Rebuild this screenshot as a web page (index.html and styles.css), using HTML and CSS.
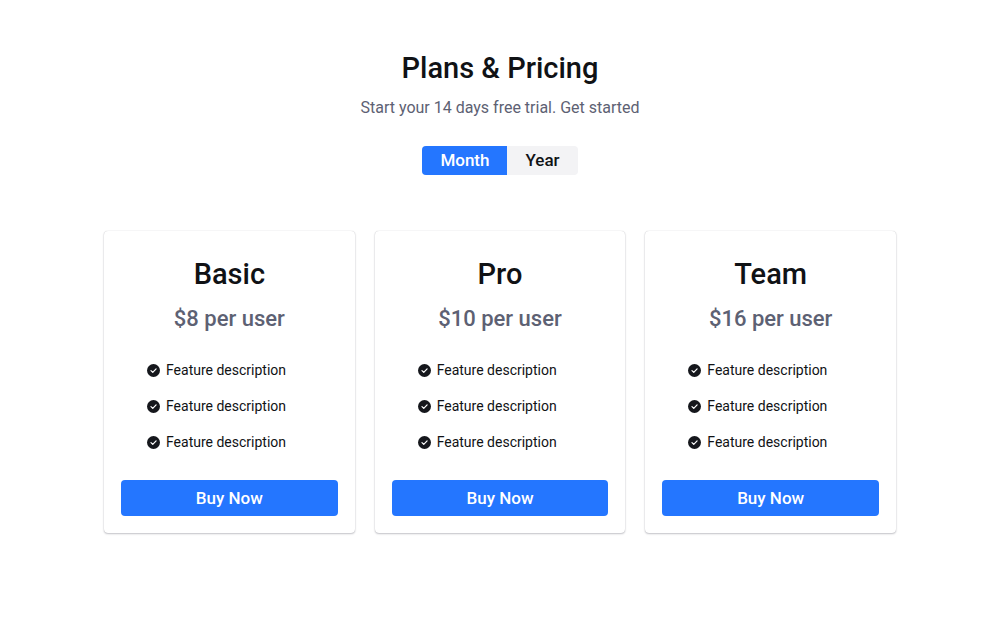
FILE: index.html
```html
<!DOCTYPE html>
<html lang="en">
<head>
  <title>Plans &amp; Pricing</title>
  <meta charset="UTF-8">
  <meta name="viewport" content="width=device-width, initial-scale=1.0">
  <link rel="stylesheet" href="styles.css">
</head>
<body>
  <svg class="sprite" aria-hidden="true">
    <symbol id="check" viewBox="0 0 14 14">
      <circle cx="7" cy="7" r="7" fill="#15171c"/>
      <path d="M4.3 7.2l1.9 1.8 3.6-3.7" fill="none" stroke="#fff" stroke-width="1.3" stroke-linecap="round" stroke-linejoin="round"/>
    </symbol>
  </svg>

  <main class="pricing">
    <header class="intro">
      <h1>Plans &amp; Pricing</h1>
      <p>Start your 14 days free trial. Get started</p>
      <div class="toggle" role="group" aria-label="Billing period">
        <button type="button" class="active" aria-pressed="true">Month</button>
        <button type="button" aria-pressed="false">Year</button>
      </div>
    </header>

    <div class="plans">
      <section class="card">
        <h2>Basic</h2>
        <p class="price">$8 per user</p>
        <ul>
          <li><svg class="icon"><use href="#check"/></svg>Feature description</li>
          <li><svg class="icon"><use href="#check"/></svg>Feature description</li>
          <li><svg class="icon"><use href="#check"/></svg>Feature description</li>
        </ul>
        <button type="button" class="buy">Buy Now</button>
      </section>
      <section class="card">
        <h2>Pro</h2>
        <p class="price">$10 per user</p>
        <ul>
          <li><svg class="icon"><use href="#check"/></svg>Feature description</li>
          <li><svg class="icon"><use href="#check"/></svg>Feature description</li>
          <li><svg class="icon"><use href="#check"/></svg>Feature description</li>
        </ul>
        <button type="button" class="buy">Buy Now</button>
      </section>
      <section class="card">
        <h2>Team</h2>
        <p class="price">$16 per user</p>
        <ul>
          <li><svg class="icon"><use href="#check"/></svg>Feature description</li>
          <li><svg class="icon"><use href="#check"/></svg>Feature description</li>
          <li><svg class="icon"><use href="#check"/></svg>Feature description</li>
        </ul>
        <button type="button" class="buy">Buy Now</button>
      </section>
    </div>
  </main>

  <script>
    const options = document.querySelectorAll('.toggle button');
    options.forEach(btn => btn.addEventListener('click', () => {
      options.forEach(b => {
        b.classList.toggle('active', b === btn);
        b.setAttribute('aria-pressed', b === btn);
      });
    }));
  </script>
</body>
</html>
```
FILE: styles.css
```css
* {
  box-sizing: border-box;
}
body {
  margin: 0;
  background: #fff;
  color: #101215;
  font-family: Roboto, "Liberation Sans", sans-serif;
}
h1, h2, p, ul {
  margin: 0;
  padding: 0;
}
button {
  border: 0;
  font: inherit;
  font-weight: 500;
  cursor: pointer;
}
.sprite {
  display: none;
}
.pricing {
  max-width: 824px;
  margin: 0 auto;
  padding: 52px 16px;
}
.intro {
  display: flex;
  flex-direction: column;
  align-items: center;
  text-align: center;
}
h1, h2 {
  font-size: 29px;
  line-height: 32px;
  font-weight: 500;
}
.intro p {
  margin-top: 12px;
  font-size: 16px;
  line-height: 24px;
  color: #5d6173;
}
.toggle {
  display: flex;
  margin-top: 26px;
  border-radius: 4px;
  overflow: hidden;
  background: #f3f3f5;
}
.toggle button {
  padding: 0 18px;
  font-size: 17px;
  line-height: 29px;
  color: #101215;
  background: none;
}
.toggle .active {
  background: #2476ff;
  color: #fff;
}
.plans {
  display: grid;
  grid-template-columns: repeat(auto-fit, minmax(220px, 1fr));
  gap: 20px;
  margin-top: 56px;
}
.card {
  padding: 27px 17px 17px;
  border-radius: 4px;
  text-align: center;
  box-shadow: 0 0 1px rgba(20, 22, 40, .24), 0 1px 2px rgba(20, 22, 40, .24);
}
.price {
  margin-top: 13px;
  font-size: 22px;
  line-height: 32px;
  font-weight: 500;
  color: #5d6173;
}
.card ul {
  margin: 17px 0 20px 26px;
  list-style: none;
}
.card li {
  display: flex;
  align-items: center;
  gap: 6px;
  font-size: 14px;
  line-height: 36px;
}
.icon {
  width: 13px;
  height: 13px;
}
.buy {
  width: 100%;
  border-radius: 4px;
  background: #2476ff;
  color: #fff;
  font-size: 17px;
  line-height: 36px;
  padding: 0;
}
```
